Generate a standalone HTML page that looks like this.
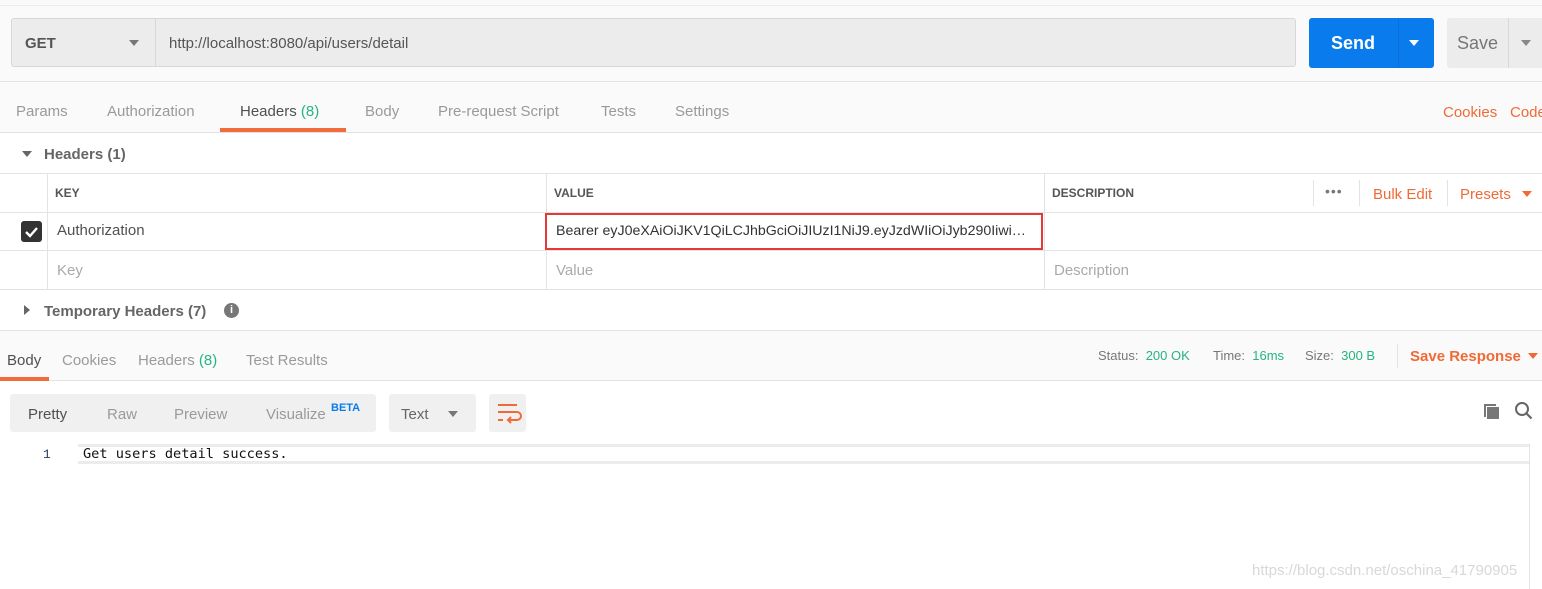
<!DOCTYPE html>
<html><head><style>
*{margin:0;padding:0;box-sizing:border-box}
body{width:1542px;height:589px;overflow:hidden;background:#fff;font-family:"Liberation Sans",sans-serif;position:relative;color:#505050}
.a{position:absolute;white-space:nowrap}
.t{font-size:15px;color:#9a9a9a}
.ln{position:absolute;background:#e3e3e3}
.or{color:#f06a35}
.gr{color:#26b47f}
</style></head><body>
<div class="a" style="left:0;top:0;width:1542px;height:132px;background:#fafafa"></div>
<div class="ln" style="left:0;top:5px;width:1542px;height:1px;background:#ececec"></div>
<div class="a" style="left:11px;top:18px;width:1285px;height:49px;background:#ececec;border:1px solid #d8d8d8;border-radius:3px"></div>
<div class="ln" style="left:155px;top:19px;width:1px;height:47px;background:#d8d8d8"></div>
<div class="a" style="left:25px;top:35px;font-size:15px;font-weight:bold;color:#555">GET</div>
<div class="a" style="left:129px;top:40px;border:5px solid transparent;border-top:6px solid #777;border-bottom:0"></div>
<div class="a" style="left:169px;top:35px;font-size:15px;color:#555">http://localhost:8080/api/users/detail</div>
<div class="a" style="left:1309px;top:18px;width:125px;height:50px;background:#097bed;border-radius:3px"></div>
<div class="ln" style="left:1398px;top:18px;width:1px;height:50px;background:#0a6fd6"></div>
<div class="a" style="left:1331px;top:33px;font-size:18px;font-weight:bold;color:#fff">Send</div>
<div class="a" style="left:1409px;top:40px;border:5px solid transparent;border-top:6px solid #fff;border-bottom:0"></div>
<div class="a" style="left:1447px;top:18px;width:100px;height:50px;background:#ececec;border-radius:3px"></div>
<div class="ln" style="left:1508px;top:18px;width:1px;height:50px;background:#d8d8d8"></div>
<div class="a" style="left:1457px;top:33px;font-size:18px;color:#777">Save</div>
<div class="a" style="left:1521px;top:40px;border:5px solid transparent;border-top:6px solid #888;border-bottom:0"></div>
<div class="ln" style="left:0;top:81px;width:1542px;height:1px"></div>
<div class="a t" style="left:16px;top:103px">Params</div>
<div class="a t" style="left:107px;top:103px">Authorization</div>
<div class="a t" style="left:240px;top:103px;color:#505050">Headers <span class="gr">(8)</span></div>
<div class="a" style="left:220px;top:128px;width:126px;height:4px;background:#f26b3a"></div>
<div class="a t" style="left:365px;top:103px">Body</div>
<div class="a t" style="left:438px;top:103px">Pre-request Script</div>
<div class="a t" style="left:601px;top:103px">Tests</div>
<div class="a t" style="left:675px;top:103px">Settings</div>
<div class="a t or" style="left:1443px;top:104px">Cookies</div>
<div class="a t or" style="left:1510px;top:104px">Code</div>
<div class="ln" style="left:0;top:132px;width:1542px;height:1px"></div>
<div class="a" style="left:22px;top:151px;border:5px solid transparent;border-top:6px solid #666;border-bottom:0"></div>
<div class="a" style="left:44px;top:146px;font-size:15px;font-weight:bold;color:#666">Headers (1)</div>
<div class="ln" style="left:0;top:173px;width:1542px;height:1px"></div>
<div class="ln" style="left:0;top:212px;width:1542px;height:1px"></div>
<div class="ln" style="left:0;top:250px;width:1542px;height:1px"></div>
<div class="ln" style="left:0;top:289px;width:1542px;height:1px"></div>
<div class="ln" style="left:47px;top:173px;width:1px;height:116px"></div>
<div class="ln" style="left:546px;top:173px;width:1px;height:116px"></div>
<div class="ln" style="left:1044px;top:173px;width:1px;height:116px"></div>
<div class="ln" style="left:1313px;top:180px;width:1px;height:26px"></div>
<div class="ln" style="left:1359px;top:180px;width:1px;height:26px"></div>
<div class="ln" style="left:1447px;top:180px;width:1px;height:26px"></div>
<div class="a" style="left:55px;top:186px;font-size:12px;font-weight:bold;color:#555">KEY</div>
<div class="a" style="left:554px;top:186px;font-size:12px;font-weight:bold;color:#555">VALUE</div>
<div class="a" style="left:1052px;top:186px;font-size:12px;font-weight:bold;color:#555">DESCRIPTION</div>
<div class="a" style="left:1325px;top:183px;font-size:14px;color:#777;letter-spacing:1px">•••</div>
<div class="a or" style="left:1373px;top:186px;font-size:15px">Bulk Edit</div>
<div class="a or" style="left:1460px;top:186px;font-size:15px">Presets</div>
<div class="a" style="left:1522px;top:191px;border:5px solid transparent;border-top:6px solid #f06a35;border-bottom:0"></div>
<div class="a" style="left:21px;top:221px;width:21px;height:21px;background:#333;border-radius:3px"></div>
<svg class="a" style="left:21px;top:221px" width="21" height="21"><path d="M5 11l4 4 7-8" stroke="#fff" stroke-width="2.4" fill="none"/></svg>
<div class="a" style="left:57px;top:222px;font-size:15px;color:#505050">Authorization</div>
<div class="a" style="left:545px;top:213px;width:498px;height:37px;border:2px solid #e53935"></div>
<div class="a" style="left:556px;top:223px;font-size:14.2px;color:#333">Bearer eyJ0eXAiOiJKV1QiLCJhbGciOiJIUzI1NiJ9.eyJzdWIiOiJyb290Iiwi…</div>
<div class="a t" style="left:57px;top:262px;color:#aaa">Key</div>
<div class="a t" style="left:556px;top:262px;color:#aaa">Value</div>
<div class="a t" style="left:1054px;top:262px;color:#aaa">Description</div>
<div class="a" style="left:24px;top:305px;border:5px solid transparent;border-left:6px solid #666;border-right:0"></div>
<div class="a" style="left:44px;top:303px;font-size:15px;font-weight:bold;color:#666">Temporary Headers (7)</div>
<div class="a" style="left:224px;top:303px;width:15px;height:15px;border-radius:50%;background:#777;color:#fff;font-size:11px;font-weight:bold;text-align:center;line-height:15px">i</div>
<div class="a" style="left:0;top:330px;width:1542px;height:51px;background:#fafafa;border-top:1px solid #e3e3e3;border-bottom:1px solid #e3e3e3"></div>
<div class="a t" style="left:7px;top:352px;color:#505050">Body</div>
<div class="a" style="left:0;top:377px;width:49px;height:4px;background:#f26b3a"></div>
<div class="a t" style="left:62px;top:352px">Cookies</div>
<div class="a t" style="left:138px;top:352px">Headers <span class="gr">(8)</span></div>
<div class="a t" style="left:246px;top:352px">Test Results</div>
<div class="a" style="left:1098px;top:348px;font-size:13px;color:#777">Status: <span class="gr">&nbsp;200 OK</span></div>
<div class="a" style="left:1213px;top:348px;font-size:13px;color:#777">Time: <span class="gr">&nbsp;16ms</span></div>
<div class="a" style="left:1305px;top:348px;font-size:13px;color:#777">Size: <span class="gr">&nbsp;300 B</span></div>
<div class="ln" style="left:1397px;top:344px;width:1px;height:24px"></div>
<div class="a or" style="left:1410px;top:348px;font-size:15px;font-weight:bold">Save Response</div>
<div class="a" style="left:1528px;top:353px;border:5px solid transparent;border-top:6px solid #f06a35;border-bottom:0"></div>
<div class="a" style="left:10px;top:394px;width:366px;height:38px;background:#f0f0f0;border-radius:3px"></div>
<div class="a" style="left:28px;top:406px;font-size:15px;color:#505050">Pretty</div>
<div class="a t" style="left:107px;top:406px">Raw</div>
<div class="a t" style="left:174px;top:406px">Preview</div>
<div class="a t" style="left:266px;top:406px">Visualize</div>
<div class="a" style="left:331px;top:402px;font-size:11px;font-weight:bold;color:#097bed">BETA</div>
<div class="a" style="left:389px;top:394px;width:87px;height:38px;background:#f0f0f0;border-radius:3px"></div>
<div class="a" style="left:401px;top:406px;font-size:15px;color:#666">Text</div>
<div class="a" style="left:448px;top:411px;border:5px solid transparent;border-top:6px solid #777;border-bottom:0"></div>
<div class="a" style="left:489px;top:394px;width:37px;height:38px;background:#f0f0f0;border-radius:3px"></div>
<svg class="a" style="left:489px;top:394px" width="37" height="38"><path d="M9 11h19M9 18h19a4 4 0 0 1 0 8h-8M9 26h5M22 23l-3 3 3 3" stroke="#f06a35" stroke-width="2" fill="none"/></svg>
<svg class="a" style="left:1482px;top:401px" width="20" height="20"><path d="M2 3h12v2H4v11H2z" fill="#777"/><rect x="5" y="6" width="12" height="12" fill="#777"/></svg>
<svg class="a" style="left:1514px;top:401px" width="20" height="20"><circle cx="8" cy="8" r="6" stroke="#666" stroke-width="2" fill="none"/><path d="M12.5 12.5l5 5" stroke="#666" stroke-width="2.2"/></svg>
<div class="a" style="left:78px;top:444px;width:1452px;height:3px;background:#ececec"></div>
<div class="a" style="left:78px;top:461px;width:1452px;height:3px;background:#ececec"></div>
<div class="ln" style="left:1529px;top:444px;width:1px;height:145px"></div>
<div class="a" style="left:43px;top:447px;font-size:13px;color:#2c3e60;font-family:'Liberation Mono',monospace">1</div>
<div class="a" style="left:83px;top:446px;font-size:13.6px;color:#111;font-family:'DejaVu Sans Mono','Liberation Mono',monospace">Get users detail success.</div>
<div class="a" style="left:1252px;top:562px;font-size:15px;color:#d8d8d8">https://blog.csdn.net/oschina_41790905</div>
</body></html>
